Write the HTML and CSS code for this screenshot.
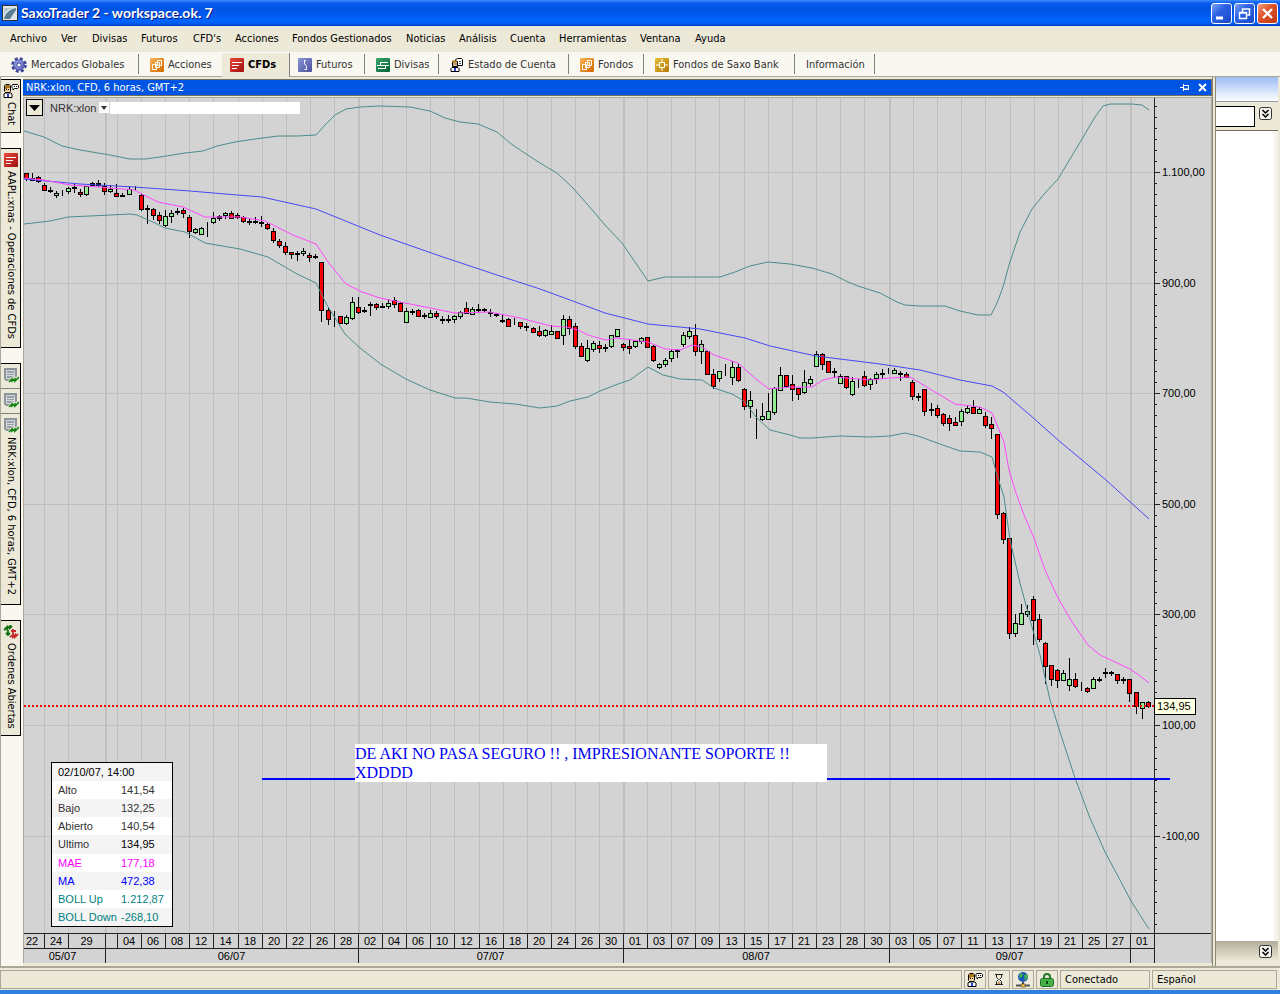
FILE: index.html
```html
<!DOCTYPE html>
<html lang="es">
<head>
<meta charset="utf-8">
<title>SaxoTrader 2 - workspace.ok. 7</title>
<link rel="stylesheet" href="styles.css">
<script src="chart.js" defer></script>
</head>
<body>
<!-- shared icons -->
<svg class="defs" width="0" height="0">
	<defs>
		<linearGradient id="orange" x2="1" y2="1"><stop offset="0" stop-color="#fbb254"/><stop offset="1" stop-color="#d06a00"/></linearGradient>
		<linearGradient id="red" x2="1" y2="1"><stop offset="0" stop-color="#e8483c"/><stop offset="1" stop-color="#a01010"/></linearGradient>
		<linearGradient id="violet" x2="1" y2="1"><stop offset="0" stop-color="#8c94d8"/><stop offset="1" stop-color="#4a529c"/></linearGradient>
		<linearGradient id="green" x2="1" y2="1"><stop offset="0" stop-color="#3aa870"/><stop offset="1" stop-color="#006030"/></linearGradient>
		<linearGradient id="gold" x2="1" y2="1"><stop offset="0" stop-color="#eabf3c"/><stop offset="1" stop-color="#b07800"/></linearGradient>
		<symbol id="i-funds" viewBox="0 0 14 14">
			<rect width="14" height="14" rx="1" fill="url(#orange)"/>
			<path d="M7.500 2.500h4v5h-4zM5.500 4.500h4v5h-4zM2.500 6.500h4v5h-4z" fill="#e88a20" stroke="#fff"/>
		</symbol>
		<symbol id="i-cfd" viewBox="0 0 14 14">
			<rect width="14" height="14" rx="1" fill="url(#red)"/>
			<path d="M2 4.500h10M2 7.500h7M2 10.500h5" stroke="#fff"/>
		</symbol>
		<symbol id="i-person" viewBox="0 0 16 14">
			<path d="M9.500.5h5l1 1v2l-1 1h-3l-1.500 1.500v-1.500l-1-1v-2z" fill="#fff" stroke="#000"/>
			<path d="M11 2.500h1m1 0h1" stroke="#000"/>
			<rect x="2" y="3" width="6" height="5" fill="#f3cf9a"/>
			<path d="M1 2h1V1h5v1h1v2H4v1H2v2H1z" fill="#a87818"/>
			<path d="M2.500.5h4M1.500 1.500v6M7.500 1.500v6M2 8.500h5" fill="none" stroke="#000"/>
			<path d="M3 5.500h1m1 0h1" stroke="#000"/>
			<path d="M1 13.500v-3.500l1-1h6l1 1v3.500z" fill="#fff" stroke="#000"/>
			<path d="M4 10h2v3h-2z" fill="#2840d8"/>
		</symbol>
		<symbol id="i-chart" viewBox="0 0 16 16">
			<path d="M1 0h13v13H3l-2-2z" fill="#8c949c"/>
			<path d="M3.500 2.500h8v8h-8zM4 5.500h7M4 7.500h7" fill="#98a0a8" stroke="#d4d8dc"/>
			<path d="M6 14l3-3v2l3-2v2l4-4" fill="none" stroke="#ece9d8" stroke-width="3"/>
			<path d="M6 14l3-3v2l3-2v2l4-4" fill="none" stroke="#108010" stroke-width="1.600"/>
		</symbol>
		<symbol id="i-more" viewBox="0 0 13 13">
			<rect x=".5" y=".5" width="12" height="12" rx="2" fill="#f4f3ee" stroke="#333"/>
			<path d="M3.500 3l3 3 3-3M3.500 7l3 3 3-3" fill="none" stroke="#000" stroke-width="1.500"/>
		</symbol>
	</defs>
</svg>

<header class="titlebar">
	<svg class="logo" width="16" height="16" viewBox="0 0 16 16"><rect x=".5" y=".5" width="15" height="15" fill="#dfe6ea" stroke="#333"/><path d="M2 14C3 9 6 5 14 3v2L8 14z" fill="#5c7c94"/><path d="M2 3h10C6 4 3 7 2 10z" fill="#b8c8d2"/></svg>
	<h1>SaxoTrader 2 - workspace.ok. 7</h1>
	<button class="win" aria-label="Minimizar"><svg width="19" height="19"><path d="M4 14h7" stroke="#fff" stroke-width="3"/></svg></button>
	<button class="win" aria-label="Restaurar"><svg width="19" height="19"><path d="M7.500 8V5h7v6h-2M4.500 8.500h7v6h-7zM4 9h8M7 5h8" fill="none" stroke="#fff" stroke-width="1.500"/></svg></button>
	<button class="win close" aria-label="Cerrar"><svg width="19" height="19"><path d="M5 5l9 9M14 5l-9 9" stroke="#fff" stroke-width="2.400"/></svg></button>
</header>

<nav class="menubar">
	<button>Archivo</button><button>Ver</button><button>Divisas</button><button>Futuros</button><button>CFD's</button><button>Acciones</button><button>Fondos Gestionados</button><button>Noticias</button><button>Análisis</button><button>Cuenta</button><button>Herramientas</button><button>Ventana</button><button>Ayuda</button>
</nav>

<nav class="tabs">
	<button><svg width="16" height="16" viewBox="0 0 16 16"><circle cx="8" cy="8" r="6.300" fill="none" stroke="#3c4494" stroke-width="3" stroke-dasharray="2.900 2.050"/><circle cx="8" cy="8" r="5.800" fill="#5860b4"/><circle cx="7.500" cy="7.500" r="4.200" fill="#8890d8"/><circle cx="8" cy="8" r="2.500" fill="#4850a0"/><circle cx="8" cy="8" r="1.600" fill="#fff"/></svg>Mercados Globales</button>
	<button class="last"><svg width="14" height="14"><use href="#i-funds"/></svg>Acciones</button>
	<button class="active"><svg width="14" height="14"><use href="#i-cfd"/></svg>CFDs</button>
	<button><svg width="14" height="14" viewBox="0 0 14 14"><rect width="14" height="14" rx="1" fill="url(#violet)"/><path d="M8 2.500H6.500v3l2 3v3H6.500" fill="none" stroke="#fff"/></svg>Futuros</button>
	<button><svg width="14" height="14" viewBox="0 0 14 14"><rect width="14" height="14" rx="1" fill="url(#green)"/><path d="M1 7.500h12M4 4.500h8M2 10.500h8M4.500 4v3M9.500 8v3" fill="none" stroke="#fff"/></svg>Divisas</button>
	<button><svg width="14" height="14" viewBox="0 0 14 14"><path d="M5.500 1.500l2-1h4l1 1v6h-5z" fill="#fff" stroke="#000"/><path d="M9 3.500h2M9 5.500h2" stroke="#555"/><path d="M2.500 3.500h5v5h-5z" fill="#f3cf9a" stroke="#000"/><path d="M2 3.500h5" stroke="#a87818" stroke-width="2"/><path d="M4 5.500v1m2-1v1" stroke="#000"/><path d="M1 13.500v-3l1-1h6l1 1v3z" fill="#fff" stroke="#000"/><path d="M4 10h2v3h-2z" fill="#2840d8"/></svg>Estado de Cuenta</button>
	<button><svg width="14" height="14"><use href="#i-funds"/></svg>Fondos</button>
	<button><svg width="14" height="14" viewBox="0 0 14 14"><rect width="14" height="14" rx="1" fill="url(#gold)"/><path d="M4.500 4.500h5v5h-5zM7 1v3M7 10v3M1 7h3M10 7h3" fill="none" stroke="#fff"/></svg>Fondos de Saxo Bank</button>
	<button>Información</button>
</nav>

<main class="workspace">
	<aside class="dock">
		<div class="dock-group chat"><button><svg width="16" height="14"><use href="#i-person"/></svg>Chat</button></div>
		<div class="dock-group trades"><button><svg width="14" height="14"><use href="#i-cfd"/></svg>AAPL:xnas - Operaciones de CFDs</button></div>
		<div class="dock-group charts">
			<button aria-label="Gráfico 1"><svg width="16" height="16"><use href="#i-chart"/></svg></button>
			<button aria-label="Gráfico 2"><svg width="16" height="16"><use href="#i-chart"/></svg></button>
			<button><svg width="16" height="16"><use href="#i-chart"/></svg>NRK:xlon, CFD, 6 horas, GMT+2</button>
		</div>
		<div class="dock-group orders"><button><svg width="16" height="14" viewBox="0 0 16 14"><path d="M1 5l3-3v2l3-3v2l2-2M5 5v5M3 8l2 2 2-2" fill="none" stroke="#107010" stroke-width="1.800"/><path d="M7 12l3-2v2l2-2v2l3-3M10 4v5M8 6h5" fill="none" stroke="#c82828" stroke-width="1.800"/></svg>Ordenes Abiertas</button></div>
	</aside>

	<section class="chart-window">
		<div class="chart-title">
			<h2>NRK:xlon, CFD, 6 horas, GMT+2</h2>
			<button aria-label="Fijar"><svg width="10" height="9" viewBox="0 0 10 9"><path d="M0 4.500h3M3.500 1v7M4 2.500h4.500v4H4M4 6h5" fill="none" stroke="#fff"/></svg></button>
			<button aria-label="Cerrar gráfico"><svg width="9" height="9" viewBox="0 0 9 9"><path d="M1 1l7 7M8 1L1 8" stroke="#fff" stroke-width="2"/></svg></button>
		</div>
		<div class="plot">
			<svg id="chart" viewBox="24 98 1187 865" role="img" aria-label="NRK:xlon"></svg>
			<div class="symbol">
				<button class="drop" aria-label="Opciones"><svg width="11" height="6"><path d="M0 0h11L5.500 6z"/></svg></button>
				<label for="symbol-name">NRK:xlon</label>
				<button class="mini" aria-label="Elegir valor"><svg width="6" height="4"><path d="M0 0h6L3 4z" fill="#333"/></svg></button>
				<input id="symbol-name" type="text">
			</div>
			<p class="note">DE AKI NO PASA SEGURO !! , IMPRESIONANTE SOPORTE !! XDDDD</p>
			<table class="values">
				<tr><th colspan="2" class="strong">02/10/07, 14:00</th></tr>
				<tr><th>Alto</th><td>141,54</td></tr>
				<tr><th>Bajo</th><td>132,25</td></tr>
				<tr><th>Abierto</th><td>140,54</td></tr>
				<tr><th>Ultimo</th><td class="strong">134,95</td></tr>
				<tr class="mae"><th>MAE</th><td>177,18</td></tr>
				<tr class="ma"><th>MA</th><td>472,38</td></tr>
				<tr class="boll"><th>BOLL Up</th><td>1.212,87</td></tr>
				<tr class="boll"><th>BOLL Down</th><td>-268,10</td></tr>
			</table>
		</div>
	</section>

	<section class="side">
		<div class="side-title"></div>
		<div class="side-bar">
			<input type="text" aria-label="Buscar">
			<button aria-label="Más"><svg width="13" height="13"><use href="#i-more"/></svg></button>
		</div>
		<div class="side-body"></div>
		<div class="side-foot"><button aria-label="Más opciones"><svg width="13" height="13"><use href="#i-more"/></svg></button></div>
	</section>
</main>

<footer class="status">
	<span></span>
	<span><svg width="16" height="14"><use href="#i-person"/></svg></span>
	<span><svg width="10" height="13" viewBox="0 0 10 13"><path d="M1 1.500h8M1 11.500h8M2.500 2v2.500l2 2-2 2V11M7.500 2v2.500l-2 2 2 2V11" fill="#fff" stroke="#222"/><path d="M3 11l2-3 2 3z" fill="#c0986c"/></svg></span>
	<span><svg width="14" height="16" viewBox="0 0 14 16"><circle cx="7" cy="5" r="5" fill="#1858b8"/><path d="M4 1l3 1-1 3-3 1zM8 3l3-1 1 3-3 4z" fill="#40b050"/><path d="M7 10v3M0 13.500h14" stroke="#555" stroke-width="2"/><rect x="5" y="12" width="4" height="3" fill="#f0c030" stroke="#333" stroke-width=".5"/></svg></span>
	<span><svg width="14" height="14" viewBox="0 0 14 14"><path d="M4 7V4a3 3 0 0 1 6 0v3" fill="none" stroke="#207828" stroke-width="2"/><rect x=".5" y="5.500" width="13" height="8" rx="2" fill="#48b048" stroke="#187020"/><path d="M7 8v3" stroke="#104818" stroke-width="2"/></svg></span>
	<span>Conectado</span>
	<span>Español</span>
</footer>
</body>
</html>
```
FILE: styles.css
```css
*{
	margin: 0;
	padding: 0;
	box-sizing: border-box;
}
body{
	display: flex;
	flex-direction: column;
	min-height: 100vh;
	background: #ece9d8;
	font: 11px/14px "DejaVu Sans Condensed", "Liberation Sans", sans-serif;
	color: #000;
}
button{
	border: 0;
	background: none;
	font: inherit;
	color: inherit;
	white-space: nowrap;
}
svg{
	display: block;
	flex: none;
}
.defs{
	position: absolute;
}

/* title bar */
.titlebar{
	display: flex;
	align-items: center;
	gap: 2px;
	height: 26px;
	padding: 0 2px;
	background: linear-gradient(#3c8cf8 0, #0a5cf0 3px, #0054e3 8px, #0058ee 14px, #0066ff 20px, #0060f8 23px, #003cc0 26px);
}
.titlebar h1{
	flex: 1;
	padding-left: 1px;
	font: bold 14px/16px Lato, sans-serif;
	color: #fff;
	text-shadow: 1px 1px #0a1883;
}
.win{
	width: 21px;
	height: 21px;
	border: 1px solid #fff;
	border-radius: 3px;
	background: linear-gradient(135deg, #7ca0f4, #2c62e4 40%, #1c48c8);
}
.win.close{
	background: linear-gradient(135deg, #f0a080, #e0552c 40%, #c03810);
}

/* menu */
.menubar{
	display: grid;
	grid-template-columns: 51px 31px 49px 52px 42px 57px 114px 53px 51px 49px 81px 55px 40px;
	align-items: center;
	height: 26px;
	padding: 0 10px;
}
.menubar button{
	text-align: left;
}

/* workspace tabs */
.tabs{
	display: grid;
	grid-template-columns: 139px 83px 68px 75px 74px 130px 75px 151px 80px;
	height: 25px;
	border-bottom: 1px solid #aca899;
	background: #f8f7f0;
	color: #333;
}
.tabs button{
	display: flex;
	align-items: center;
	gap: 4px;
	position: relative;
	padding-left: 11px;
}
.tabs button::after{
	content: "";
	position: absolute;
	right: 0;
	top: 2px;
	width: 1px;
	height: 20px;
	background: #808080;
}
.tabs button.last::after{
	display: none;
}
.tabs button.active{
	padding-left: 8px;
	height: 25px;
	background: #ece9d8;
	border-top: 1px solid #fff;
	font-weight: bold;
	color: #000;
}
.tabs button.active::after{
	top: 0;
	height: 24px;
}
.tabs button.active + button{
	padding-left: 8px;
}

/* workspace */
.workspace{
	flex: 1;
	display: flex;
	border-bottom: 2px solid #aca899;
}
.dock{
	width: 23px;
	padding-top: 2px;
	border-left: 1px solid #aca899;
	background: #f8f7f0;
}
.dock-group{
	display: flex;
	flex-direction: column;
	width: 20px;
	margin-bottom: 15px;
	border: 1px solid #000;
	border-left: 0;
	background: #ece9d8;
}
.dock-group button{
	display: flex;
	align-items: center;
	gap: 4px;
	width: 19px;
	padding: 4px 0;
	writing-mode: vertical-rl;
}
.charts button{
	gap: 3px;
}
.dock-group button + button{
	border-top: 1px solid #808080;
}
.chat{
	height: 54px;
}
.trades{
	height: 200px;
}
.charts{
	height: 242px;
}
.orders{
	height: 116px;
}

/* chart window */
.chart-window{
	flex: 1;
	min-width: 0;
	padding-top: 2px;
}
.chart-title{
	display: flex;
	align-items: center;
	gap: 8px;
	height: 17px;
	padding: 0 4px 0 3px;
	background: #0054e3;
	border: 1px solid #716f64;
	border-left: 0;
	color: #fff;
}
.chart-title h2{
	flex: 1;
	font: inherit;
}
.plot{
	position: relative;
	margin-top: 1px;
	border: 1px solid #aca899;
	border-bottom: 0;
}
#chart{
	width: 100%;
	height: auto;
	background: #d3d3d3;
	font: 11px "Liberation Sans", Arial, sans-serif;
}
.symbol{
	position: absolute;
	left: 2px;
	top: 1px;
	display: flex;
	align-items: center;
	font: 11px/14px "Liberation Sans", Arial, sans-serif;
	color: #333;
}
.drop{
	display: grid;
	place-items: center;
	width: 17px;
	height: 17px;
	margin-right: 7px;
	border: 1px solid #000;
	background: #ece9d8;
}
.mini{
	display: grid;
	place-items: center;
	width: 10px;
	height: 11px;
	margin-left: 3px;
	background: #fff;
}
.symbol input{
	width: 190px;
	height: 12px;
	margin-left: 1px;
	border: 0;
}
.note{
	position: absolute;
	left: 331px;
	top: 646px;
	width: 472px;
	background: #fff;
	font: 16px/19px "Liberation Serif", "Times New Roman", serif;
	color: #0000f0;
}
.values{
	position: absolute;
	left: 27px;
	top: 664px;
	width: 122px;
	height: 165px;
	border: 1px solid #000;
	border-spacing: 0;
	background: #fff;
	font: 11px/18px "Liberation Sans", Arial, sans-serif;
	color: #333;
}
.values tr:nth-child(odd){
	background: #f4f4f4;
}
.values th{
	width: 69px;
	padding-left: 6px;
	font-weight: normal;
	text-align: left;
	white-space: nowrap;
}
.values .strong{
	color: #000;
}
.values .mae{
	color: #f0f;
}
.values .ma{
	color: #00f;
}
.values .boll{
	color: #008080;
}

/* window behind, on the right */
.side{
	display: flex;
	flex-direction: column;
	width: 68px;
	padding-right: 2px;
	border-left: 4px double #8c8878;
}
.side-title{
	height: 25px;
	background: linear-gradient(#9cbcf4, #fff);
	border-bottom: 1px solid #8c9ca8;
}
.side-bar{
	display: flex;
	align-items: flex-start;
	gap: 4px;
	height: 29px;
	padding: 4px 6px 0 0;
	border-bottom: 1px solid #716f64;
}
.side-bar input{
	flex: 1;
	min-width: 0;
	height: 21px;
	border: 1px solid #000;
	border-left: 0;
	background: #fff;
}
.side-bar button{
	margin-top: 1px;
}
.side-body{
	flex: 1;
	border-right: 4px solid #f4f3ee;
	background: #fff;
}
.side-foot{
	display: flex;
	justify-content: flex-end;
	align-items: center;
	height: 20px;
	margin-bottom: 5px;
	padding-right: 6px;
	background: linear-gradient(#b0ad9c, #ece9d8);
}

/* status bar */
.status{
	display: grid;
	grid-template-columns: 1fr 22px 22px 22px 22px 90px 125px;
	gap: 2px;
	height: 26px;
	padding: 2px 3px 1px 0;
	border-bottom: 4px solid #2f7fe0;
}
.status span{
	display: flex;
	align-items: center;
	justify-content: center;
	border: 1px solid #aca899;
}
.status span:nth-child(n+6){
	justify-content: flex-start;
	padding-left: 4px;
}
```
FILE: chart.js
```js
/* candles: high, body top, body bottom, low, type (r falling, g rising, k flat, w wick only) */
var candles = [
	"173,173,178,180,r", "173,178,180,180,g", "176,177,181,182,r", "183,185,190,190,r", "187,190,191,192,k", "191,193,195,197,g", "190,0,0,195,w",
	"187,188,191,193,g", "184,187,188,192,k", "189,192,194,196,r", "186,186,194,195,g", "182,183,185,185,k", "180,183,185,186,k", "183,186,191,194,r",
	"185,189,191,192,g", "184,193,196,196,r", "193,195,196,196,k", "186,189,194,194,g", "186,0,0,189,w", "194,195,209,210,r", "205,208,209,223,k",
	"208,209,215,219,r", "212,215,220,223,r", "210,216,225,226,g", "210,213,216,222,g", "208,211,212,214,k", "208,210,213,217,r", "215,217,231,237,r",
	"228,229,232,233,g", "227,228,234,234,g", "222,0,0,236,w", "212,218,222,223,g", "215,216,218,220,k", "212,213,215,218,g", "211,213,218,218,r",
	"213,215,217,218,r", "216,217,221,222,r", "218,221,222,224,k", "217,221,222,223,k", "216,222,223,226,k", "223,224,228,229,r", "228,231,240,242,r",
	"239,241,245,247,r", "242,246,252,254,r", "252,252,254,258,r", "251,253,254,260,k", "248,251,253,255,g", "253,255,257,261,r", "254,256,257,258,k",
	"262,262,310,321,r", "308,310,319,324,r", "311,0,0,326,w", "316,316,323,323,r", "315,317,323,324,g", "297,302,318,319,g", "297,307,312,313,r",
	"307,310,311,312,k", "302,304,305,315,k", "303,304,307,309,r", "303,306,307,307,k", "299,303,306,308,g", "297,300,304,307,r", "302,303,311,311,r",
	"308,311,322,322,g", "309,311,312,314,k", "309,310,316,316,r", "313,315,316,318,k", "310,313,317,317,g", "311,313,316,318,r", "316,319,320,323,k",
	"315,319,320,322,k", "315,316,319,322,g", "311,312,316,318,g", "302,308,313,313,r", "307,309,314,314,g", "304,309,310,312,k", "308,309,310,311,k",
	"309,312,313,316,k", "313,314,315,316,k", "315,320,321,322,k", "318,319,326,326,r", "318,0,0,324,w", "322,322,326,328,r", "323,326,327,330,k",
	"327,328,332,332,r", "326,331,335,336,r", "329,330,335,336,g", "325,331,334,334,g", "331,331,338,338,r", "315,319,335,344,g", "316,319,328,334,r",
	"323,326,346,348,r", "343,346,356,356,r", "340,348,360,361,g", "341,343,349,351,g", "341,345,348,352,r", "344,347,348,351,k", "335,335,346,347,g",
	"329,329,336,336,g", "343,344,347,350,r", "339,346,348,353,r", "340,341,346,347,g", "337,338,341,343,g", "337,337,347,347,r", "345,346,360,361,r",
	"363,364,367,368,g", "358,360,364,366,g", "349,351,358,361,g", "349,350,351,357,k", "332,335,344,346,g", "327,331,336,338,g", "324,335,351,355,r",
	"340,344,351,363,g", "351,351,374,374,r", "369,374,386,388,r", "371,371,378,381,g", "364,0,0,375,w", "361,367,377,384,g", "363,367,380,381,r",
	"388,389,406,409,r", "391,400,406,417,g", "409,0,0,438,w", "403,416,419,420,g", "393,411,419,419,g", "387,388,412,414,g", "367,375,390,390,g",
	"375,375,386,387,r", "375,384,389,400,r", "388,388,394,399,r", "370,382,392,393,g", "376,379,383,385,g", "351,354,366,366,g", "353,354,364,369,r",
	"361,361,372,372,r", "368,371,372,377,k", "374,376,383,383,g", "376,376,387,388,r", "377,381,394,395,g", "379,0,0,387,w", "371,376,385,386,r",
	"378,379,384,389,g", "372,374,378,383,g", "369,373,374,378,k", "368,0,0,373,w", "368,370,373,373,g", "371,373,374,380,k", "372,374,377,377,r",
	"380,382,396,399,r", "393,396,397,400,k", "389,389,411,415,r", "403,409,410,415,k", "405,408,415,417,r", "413,414,423,425,r", "415,418,423,430,r",
	"417,422,425,425,r", "409,411,421,425,g", "406,408,412,413,g", "400,407,413,413,r", "407,409,413,413,g", "412,416,425,427,r", "417,424,428,438,r",
	"434,434,514,518,r", "512,513,539,543,r", "538,538,633,638,r", "614,623,633,636,g", "604,613,624,624,g", "605,611,614,616,g", "596,599,620,644,r",
	"614,619,639,641,r", "642,643,666,683,r", "665,665,679,685,r", "669,670,680,687,r", "670,673,680,680,g", "658,679,685,690,g", "673,679,686,687,r",
	"682,0,0,690,w", "687,688,691,692,r", "677,679,688,688,g", "677,679,680,681,k", "668,672,673,677,k", "671,672,673,675,k", "674,674,680,683,r",
	"677,679,680,683,k", "679,679,693,701,r", "692,692,706,713,r", "702,702,708,718,g", "701,702,706,707,r"
];

/* indicator lines */
var lines = {
	"#4c8c8c": [
		"24,131 44,137 62,146 80,150 92,152 110,155 130,159 145,159 160,157 185,153 203,151 217,146 235,142 255,139 278,136 298,136 316,135 325,125 335,115 346,109 360,107 380,106 410,107 430,111 445,118 460,122 478,124 497,132 510,143 520,150 540,163 557,173 572,187 588,205 605,225 622,243 635,262 648,281 665,277 690,277 720,277 735,272 750,266 768,262 790,264 812,268 832,274 848,282 858,286 880,293 897,302 905,305 920,306 945,306 960,311 978,315 991,315 997,303 1003,287 1009,265 1020,232 1032,209 1045,193 1058,179 1070,159 1082,139 1095,117 1103,106 1110,104 1132,104 1142,105 1149,110",
		"24,224 50,221 68,217 90,216 130,214 137,215 155,223 165,228 185,232 205,243 240,249 268,257 297,274 316,283 327,305 345,334 360,348 382,365 406,379 430,390 455,398 466,398 490,402 515,404 540,408 557,406 570,401 588,397 600,391 618,384 630,380 648,367 663,375 680,379 702,380 714,388 732,394 744,401 756,417 770,430 790,435 800,438 812,438 840,436 870,437 890,436 905,433 918,436 940,444 960,451 980,452 992,457 997,475 1004,497 1010,540 1020,583 1030,620 1040,655 1050,700 1060,732 1075,778 1090,818 1105,852 1120,880 1131,901 1149,929"
	],
	"#4848f8": [
		"24,179 80,184 134,187 190,191 225,194 262,197 316,209 380,235 440,256 500,276 540,289 570,300 605,313 648,324 700,329 745,338 770,346 816,356 880,364 920,370 960,380 992,386 1003,392 1030,415 1058,440 1106,480 1149,519"
	],
	"#ff48ff": [
		"24,178 44,180 70,185 100,187 134,190 158,202 183,207 205,217 240,217 265,221 293,235 316,244 328,262 346,284 362,292 380,298 410,304 440,310 455,313 490,312 520,318 551,326 566,327 578,330 588,335 606,340 617,338 648,342 665,349 680,350 692,345 702,347 714,355 738,363 756,379 769,389 790,387 812,387 823,380 836,377 870,380 890,378 910,377 925,386 955,404 980,407 992,413 1004,442 1009,470 1015,490 1024,515 1034,538 1045,570 1058,598 1072,622 1088,645 1100,655 1115,662 1130,669 1140,676 1149,683"
	]
};

/* time axis: left edge of each day cell, then its label */
var months = [[20, "05/07"], [105, "06/07"], [358, "07/07"], [623, "08/07"], [889, "09/07"], [1130, ""]];
var days = [[20, "22"], [44, "24"], [68, "29"], [105, ""]];
function addDays(start, labels){
	labels.split(" ").forEach(function(label, i){
		days.push([Math.round(start + i * 24.12), label]);
	});
}
addDays(117, "04 06 08 12 14 18 20 22 26 28");
addDays(358, "02 04 06 10 12 16 18 20 24 26 30");
addDays(623, "01 03 07 09 13 15 17 21 23 28 30");
addDays(889, "03 05 07 11 13 17 19 21 25 27");
addDays(1130, "01");

var AXIS_X = 1154, AXIS_Y = 933;
var out = "";

function rect(x, y, w, h, fill){
	out += '<rect x="' + x + '" y="' + y + '" width="' + w + '" height="' + h + '" fill="' + fill + '"/>';
}
function text(x, y, str, anchor){
	out += '<text x="' + x + '" y="' + y + '" text-anchor="' + (anchor || "start") + '">' + str + '</text>';
}
function priceY(price){
	return Math.round(172 + (1100 - price) * 0.553);
}

/* grid */
days.forEach(function(d){
	if(d[0] > 24) rect(d[0], 98, 1, AXIS_Y - 98, "#bfbfbf");
});
months.forEach(function(m){
	if(m[0] > 24) rect(m[0], 98, 2, AXIS_Y - 98, "#bfbfbf");
});
for(var p = 1100; p >= -100; p -= 200){
	rect(24, priceY(p), AXIS_X - 24, 1, "#bfbfbf");
}

/* candles */
candles.forEach(function(row, i){
	var c = row.split(","), x = Math.round(26 + i * 6.03);
	var hi = +c[0], top = +c[1], bottom = +c[2], lo = +c[3];
	rect(x, hi, 1, lo - hi + 1, "#000");
	if(c[4] == "w") return;
	rect(x - 2, top, 5, bottom - top + 1, "#000");
	if(c[4] == "k") return;
	rect(x - 1, top + 1, 3, Math.max(1, bottom - top - 1), c[4] == "r" ? "#f00" : "#90ee90");
});

for(var color in lines){
	lines[color].forEach(function(points){
		out += '<polyline points="' + points + '" fill="none" stroke="' + color + '"/>';
	});
}

/* last price and support */
out += '<path d="M24 706H1154" stroke="#f00" stroke-width="2" stroke-dasharray="2 2"/>';
out += '<path d="M262 779H1170" stroke="#00f" stroke-width="2"/>';

/* price axis */
rect(AXIS_X, 98, 1, AXIS_Y - 68, "#222");
for(p = 1220; p >= -260; p -= 20){
	rect(AXIS_X, priceY(p), 3, 1, "#222");
}
for(p = 1100; p >= -100; p -= 200){
	rect(AXIS_X, priceY(p), 6, 1, "#222");
	text(1162, priceY(p) + 4, p >= 1000 ? "1.100,00" : p + ",00");
}
out += '<rect x="1154.5" y="698.5" width="41" height="16" fill="#ffffe1" stroke="#000"/>';
text(1157, 710, "134,95");

/* time axis */
rect(24, AXIS_Y, 1187, 1, "#222");
rect(24, AXIS_Y + 15, AXIS_X - 24, 1, "#222");
days.forEach(function(d, i){
	var next = i + 1 < days.length ? days[i + 1][0] : AXIS_X;
	if(d[0] > 24) rect(d[0], AXIS_Y, 1, 15, "#222");
	text((d[0] + next) / 2, AXIS_Y + 12, d[1], "middle");
});
months.forEach(function(m, i){
	var next = i + 1 < months.length ? months[i + 1][0] : AXIS_X;
	if(m[0] > 24) rect(m[0], AXIS_Y, 1, 30, "#222");
	text((m[0] + next) / 2, AXIS_Y + 27, m[1], "middle");
});

document.getElementById("chart").innerHTML = out;
```
